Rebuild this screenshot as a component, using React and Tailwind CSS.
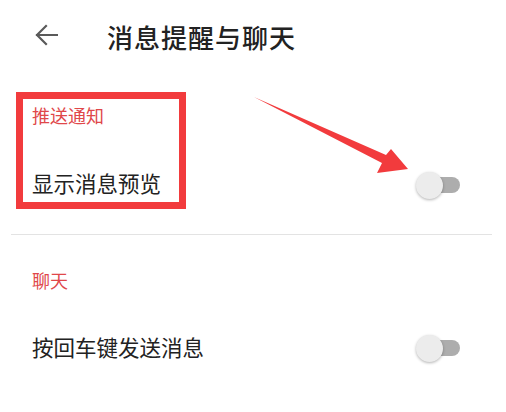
import React from 'react';

const Toggle = () => (
  <div className="relative w-[44px] h-[28px] shrink-0">
    <div className="absolute left-[8px] right-0 top-[6px] h-[16px] rounded-full bg-[#adadad]" />
    <div className="absolute left-0 top-[1px] w-[27px] h-[27px] rounded-full bg-[#ececec] shadow-[0_1px_3px_rgba(0,0,0,0.3)]" />
  </div>
);

const App = () => {
  return (
    <div
      className="relative w-[506px] h-[412px] overflow-hidden bg-white text-[#222]"
      style={{ fontFamily: '"Noto Sans CJK SC", "Noto Sans", sans-serif' }}
    >
      {/* header */}
      <div className="h-[74px] flex items-center pl-[35px]">
        <svg width="23" height="22" viewBox="0 0 23 22" className="mt-[-4px]">
          <path d="M22 11H2M11 2L2 11l9 9" fill="none" stroke="#5a5a5a" strokeWidth="2.2" strokeLinecap="square" />
        </svg>
        <span className="ml-[49px] text-[26px] leading-none font-medium tracking-[1px]">消息提醒与聊天</span>
      </div>

      {/* push section */}
      <div className="pl-[32px] mt-[29px] h-[24px] leading-[24px] text-[18px] text-[#e0474a]">推送通知</div>
      <div className="mt-[28px] h-[56px] flex items-center justify-between pl-[32px] pr-[46px]">
        <span className="text-[21.5px]">显示消息预览</span>
        <div className="mt-[4px]"><Toggle /></div>
      </div>

      <div className="mt-[23px] ml-[11px] mr-[14px] h-px bg-[#e3e3e3]" />

      {/* chat section */}
      <div className="pl-[32px] mt-[33px] h-[24px] leading-[24px] text-[18px] text-[#e0474a]">聊天</div>
      <div className="mt-[27px] h-[56px] flex items-center justify-between pl-[32px] pr-[46px]">
        <span className="text-[21.5px]">按回车键发送消息</span>
        <div className="mt-[2px]"><Toggle /></div>
      </div>

      {/* annotation: red box */}
      <div className="absolute left-[16px] top-[92px] w-[170px] h-[117px] border-[7px] border-[#f23b3d]" />

      {/* annotation: arrow */}
      <svg className="absolute left-0 top-0" width="506" height="412" viewBox="0 0 506 412">
        <polygon
          points="254,97 386,155 391,149 408,169 377,173 382,163"
          fill="#f23b3d"
        />
      </svg>
    </div>
  );
};

export default App;
